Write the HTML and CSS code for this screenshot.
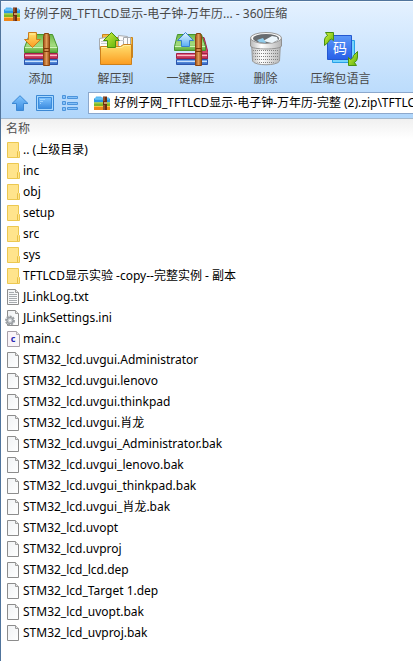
FILE: index.html
```html
<!DOCTYPE html>
<html lang="zh-CN">
<head>
    <meta charset="UTF-8">
    <meta name="viewport" content="width=device-width, initial-scale=1.0">
    <title>好例子网_TFTLCD显示-电子钟-万年历... - 360压缩</title>
    <link rel="stylesheet" href="styles.css">
</head>
<body>

    <svg class="sprite" aria-hidden="true">
        <defs>
            <linearGradient id="gGreen" x1="0" y1="0" x2="0" y2="1">
                <stop offset="0" stop-color="#6cb848"/><stop offset=".6" stop-color="#a4dc80"/><stop offset="1" stop-color="#58a838"/>
            </linearGradient>
            <linearGradient id="gRed" x1="0" y1="0" x2="0" y2="1">
                <stop offset="0" stop-color="#e8708c"/><stop offset="1" stop-color="#b82850"/>
            </linearGradient>
            <linearGradient id="gBlue" x1="0" y1="0" x2="0" y2="1">
                <stop offset="0" stop-color="#80b4f4"/><stop offset="1" stop-color="#3064c0"/>
            </linearGradient>
            <linearGradient id="gBelt" x1="0" y1="0" x2="1" y2="0">
                <stop offset="0" stop-color="#a05018"/><stop offset=".5" stop-color="#e09c58"/><stop offset="1" stop-color="#984810"/>
            </linearGradient>
            <linearGradient id="gOrange" x1="0" y1="0" x2="0" y2="1">
                <stop offset="0" stop-color="#ffe070"/><stop offset="1" stop-color="#fb9c20"/>
            </linearGradient>
            <linearGradient id="gLime" x1="0" y1="0" x2="1" y2="1">
                <stop offset="0" stop-color="#d4f040"/><stop offset="1" stop-color="#58b008"/>
            </linearGradient>
            <linearGradient id="gSky" x1="0" y1="0" x2="0" y2="1">
                <stop offset="0" stop-color="#e4f6ff"/><stop offset="1" stop-color="#58acf4"/>
            </linearGradient>
            <linearGradient id="gNav" x1="0" y1="0" x2="0" y2="1">
                <stop offset="0" stop-color="#80c4ff"/><stop offset="1" stop-color="#3c8ce0"/>
            </linearGradient>
            <linearGradient id="gBin" x1="0" y1="0" x2="1" y2="0">
                <stop offset="0" stop-color="#b8b8b8"/><stop offset=".35" stop-color="#ffffff"/><stop offset="1" stop-color="#b4b4b4"/>
            </linearGradient>
            <linearGradient id="gTile" x1="0" y1="0" x2="0" y2="1">
                <stop offset="0" stop-color="#5c98f8"/><stop offset="1" stop-color="#2860e8"/>
            </linearGradient>
            <linearGradient id="gPage" x1="0" y1="0" x2="1" y2="1">
                <stop offset="0" stop-color="#f0f2f4"/><stop offset="1" stop-color="#ffffff"/>
            </linearGradient>
            <pattern id="holes" width="2" height="3" patternUnits="userSpaceOnUse">
                <rect width="1" height="1" fill="#808080"/>
            </pattern>
        </defs>

        <symbol id="archive" viewBox="0 0 16 14">
            <path d="M1 2.500L2 .5h5l1 1h7v5H0V3z" fill="#58b8f4"/>
            <path d="M0 2.500h16v4H0z" fill="#2c98e4"/>
            <path d="M1 3h14" stroke="#8cdcfc"/>
            <path d="M0 6.500h16V10H0z" fill="#7cb828"/>
            <path d="M0 7h16" stroke="#b8dc4c"/>
            <path d="M0 10h16v4H0z" fill="#f08818"/>
            <path d="M0 10.500h16" stroke="#fcc444"/>
            <path d="M9 .5h4V14H9z" fill="#6c2c10"/>
            <path d="M10 1v4M10 9v5" stroke="#b87848"/>
            <path d="M10 6h3v2h-3z" fill="#c89868"/>
        </symbol>

        <symbol id="belt" viewBox="0 0 34 34">
            <path d="M19.500 4.500l1-3h4l1 3v29h-6z" fill="url(#gBelt)" stroke="#8c4410"/>
            <path d="M20 16.500h5v3h-5z" fill="#d48c50" stroke="#7c3808"/>
        </symbol>
        <symbol id="add" viewBox="0 0 34 34">
            <path d="M.5 27.500h33v5H.5z" fill="url(#gBlue)" stroke="#2c54ac"/>
            <path d="M1 29.500h32" stroke="#c8e0fc"/>
            <path d="M.5 21.500h33v5H.5z" fill="url(#gRed)" stroke="#a02048"/>
            <path d="M1 23.500h32" stroke="#fcbcc8"/>
            <path d="M5.500 2.500h23l5 13v5H.5v-5z" fill="url(#gGreen)" stroke="#48942c"/>
            <path d="M1 15.500h32" stroke="#d0f4b8"/>
            <use href="#belt"/>
            <path d="M4.500.5h8v7h4L8.500 15.500.5 7.500h4z" fill="url(#gOrange)" stroke="#cc7c1c"/>
            <path d="M6 2h5" stroke="#fff0a0"/>
        </symbol>
        <symbol id="extract" viewBox="0 0 34 34">
            <path d="M3.500 2.500h8l2 3h20v20h-30z" fill="#f4b840" stroke="#c8841c"/>
            <path d="M.5 6.500l13-2v13H.5zM19.500 3.500l9 1v13h-9zM24.500 5.500h7v12h-7z" fill="#fcfcfc" stroke="#a8acb0"/>
            <path d="M2 9.500h7M2 11.500h7M21 8.500h4" stroke="#c8ccd0"/>
            <path d="M1.500 14.500h20l3-2h8v20h-31z" fill="url(#gOrange)" stroke="#cc801c"/>
            <path d="M2.500 15.500h20l3-2h6" fill="none" stroke="#fff0a0"/>
            <path d="M12.500.5l8 8h-4v7h-8v-7h-4z" fill="url(#gLime)" stroke="#489010"/>
        </symbol>
        <symbol id="quick" viewBox="0 0 34 34">
            <path d="M28 5.500h2l4 15v6h-6z" fill="#d84468" stroke="#a02048"/>
            <path d="M2.500 27.500h31v5h-31z" fill="url(#gBlue)" stroke="#2c54ac"/>
            <path d="M3 29.500h30" stroke="#c8e0fc"/>
            <path d="M2.500 21.500h31v5h-31z" fill="url(#gRed)" stroke="#a02048"/>
            <path d="M3 23.500h30" stroke="#fcbcc8"/>
            <path d="M3.500 2.500h24l4 12v4H.5v-4z" fill="url(#gGreen)" stroke="#48942c"/>
            <path d="M1 14.500h30" stroke="#d0f4b8"/>
            <use href="#belt" x="2"/>
            <path d="M11.500.5l8 8h-4v6h-8v-6h-4z" fill="url(#gSky)" stroke="#3880d0"/>
        </symbol>
        <symbol id="delete" viewBox="0 0 34 34">
            <path d="M2.500 10h29l-1 19c-2 5-25 5-27 0z" fill="url(#gBin)" stroke="#989898"/>
            <path d="M4 17h26l-1 12c-2 3-22 3-24 0z" fill="url(#holes)"/>
            <path d="M1.500 6v8c1 4 30 4 31 0V6z" fill="url(#gBin)" stroke="#909090"/>
            <ellipse cx="17" cy="6" rx="15.500" ry="5.500" fill="#f8f8f8" stroke="#989898"/>
            <ellipse cx="17" cy="6.500" rx="13" ry="4.500" fill="#686c70"/>
            <path d="M14 9l9-5 5 1 1 3-6 3z" fill="#ecf6fc"/>
            <path d="M8 8l6-2 3 5-7-1z" fill="#90ccec"/>
        </symbol>

        <symbol id="up" viewBox="0 0 18 16">
            <path d="M9 .7L17 8.500h-4.500v7h-7v-7H1z" fill="url(#gNav)" stroke="#3c88d4"/>
        </symbol>
        <symbol id="view" viewBox="0 0 18 16">
            <path d="M.5.5h17v15H.5z" fill="#a8d8ff" stroke="#3c88d4"/>
            <path d="M2.500 2.500h13v11h-13z" fill="url(#gNav)" stroke="#3c8cdc"/>
            <path d="M4 4.500h5M4 6.500h3M4 8.500h1" stroke="#a0d4ff"/>
        </symbol>
        <symbol id="list" viewBox="0 0 16 16">
            <path d="M.5.5h3v3h-3zM.5 6.500h3v3h-3zM.5 12.500h3v3h-3zM5.500 1.500h10v2h-10zM5.500 7.500h10v2h-10zM5.500 12.500h10v2h-10z" fill="#84c0f8" stroke="#4c94dc"/>
        </symbol>

        <symbol id="folder" viewBox="0 0 14 16">
            <path d="M.5.5h11v8l1 1v6H.5z" fill="#ffe48c" stroke="#ecc850"/>
            <path d="M10.500 15V9.500l1-1" fill="none" stroke="#e8c044"/>
        </symbol>
        <symbol id="file" viewBox="0 0 14 16">
            <path d="M.5.5h8l3 3v12H.5z" fill="url(#gPage)" stroke="#8c8c8c"/>
            <path d="M8.500.5v3h3" fill="#e4e4e4" stroke="#9c9c9c"/>
        </symbol>
        <symbol id="text" viewBox="0 0 14 16">
            <use href="#file"/>
            <path d="M2 3.500h5M2 5.500h8M2 7.500h8M2 9.500h8M2 11.500h8M2 13.500h8" stroke="#a8acb0"/>
        </symbol>
    </svg>

    <div class="window">
        <header class="top">
            <div class="title-bar">
                <svg class="archive-icon"><use href="#archive"/></svg>
                <h1 class="title">好例子网_TFTLCD显示-电子钟-万年历... - 360压缩</h1>
            </div>

            <div class="toolbar">
                <button class="tool"><svg class="tool-icon"><use href="#add"/></svg>添加</button>
                <button class="tool"><svg class="tool-icon"><use href="#extract"/></svg>解压到</button>
                <button class="tool"><svg class="tool-icon"><use href="#quick"/></svg>一键解压</button>
                <button class="tool"><svg class="tool-icon"><use href="#delete"/></svg>删除</button>
                <button class="tool">
                    <svg class="tool-icon" viewBox="0 0 34 34">
                        <path d="M8.500 8.500h22v22h-22z" fill="#74d4fc" stroke="#28a0e8"/>
                        <path d="M3.500 3.500h24v24h-24z" fill="url(#gTile)" stroke="#2458d0"/>
                        <text x="16" y="21" text-anchor="middle" class="tile-text">码</text>
                        <path d="M.5 13.500V8q0-3 3-4.500L1.500.5h8v8L7.500 7q-3 1-3 3z" fill="url(#gLime)" stroke="#489010"/>
                        <path d="M33.500 19.500V25q0 4-3 5.500l2 3h-8v-8l2 2q3-1 3-4z" fill="url(#gLime)" stroke="#489010"/>
                    </svg>
                    压缩包语言
                </button>
            </div>

            <div class="address-bar">
                <button class="nav" aria-label="向上"><svg class="nav-icon"><use href="#up"/></svg></button>
                <button class="nav" aria-label="预览"><svg class="nav-icon"><use href="#view"/></svg></button>
                <button class="nav" aria-label="列表"><svg class="nav-icon"><use href="#list"/></svg></button>
                <label class="address">
                    <svg class="archive-icon"><use href="#archive"/></svg>
                    <input type="text" class="address-input" aria-label="路径" value="好例子网_TFTLCD显示-电子钟-万年历-完整 (2).zip\TFTLCD显示实验">
                </label>
            </div>
        </header>

        <table class="files">
            <thead>
                <tr><th>名称</th></tr>
            </thead>
            <tbody>
                <tr><td><svg class="file-icon"><use href="#folder"/></svg>.. (上级目录)</td></tr>
                <tr><td><svg class="file-icon"><use href="#folder"/></svg>inc</td></tr>
                <tr><td><svg class="file-icon"><use href="#folder"/></svg>obj</td></tr>
                <tr><td><svg class="file-icon"><use href="#folder"/></svg>setup</td></tr>
                <tr><td><svg class="file-icon"><use href="#folder"/></svg>src</td></tr>
                <tr><td><svg class="file-icon"><use href="#folder"/></svg>sys</td></tr>
                <tr><td><svg class="file-icon"><use href="#folder"/></svg>TFTLCD显示实验 -copy--完整实例 - 副本</td></tr>
                <tr><td><svg class="file-icon"><use href="#text"/></svg>JLinkLog.txt</td></tr>
                <tr>
                    <td>
                        <svg class="file-icon">
                            <use href="#file"/>
                            <circle cx="3" cy="10.500" r="4" fill="#d0d4d8" stroke="#9ca0a4" stroke-width="2" stroke-dasharray="2 1"/>
                            <circle cx="3" cy="10.500" r="3" fill="#c8ccd0" stroke="#909498"/>
                            <circle cx="3" cy="10.500" r="1" fill="#ffffff"/>
                        </svg>JLinkSettings.ini
                    </td>
                </tr>
                <tr>
                    <td>
                        <svg class="file-icon">
                            <path d="M.5.5h9l3 3v12H.5z" fill="#faf4f8" stroke="#a8a0a8"/>
                            <path d="M9.500.5v3h3" fill="#e4e4e4" stroke="#b4acb4"/>
                            <text x="6" y="11" text-anchor="middle" class="c-text">c</text>
                        </svg>main.c
                    </td>
                </tr>
                <tr><td><svg class="file-icon"><use href="#file"/></svg>STM32_lcd.uvgui.Administrator</td></tr>
                <tr><td><svg class="file-icon"><use href="#file"/></svg>STM32_lcd.uvgui.lenovo</td></tr>
                <tr><td><svg class="file-icon"><use href="#file"/></svg>STM32_lcd.uvgui.thinkpad</td></tr>
                <tr><td><svg class="file-icon"><use href="#file"/></svg>STM32_lcd.uvgui.肖龙</td></tr>
                <tr><td><svg class="file-icon"><use href="#file"/></svg>STM32_lcd.uvgui_Administrator.bak</td></tr>
                <tr><td><svg class="file-icon"><use href="#file"/></svg>STM32_lcd.uvgui_lenovo.bak</td></tr>
                <tr><td><svg class="file-icon"><use href="#file"/></svg>STM32_lcd.uvgui_thinkpad.bak</td></tr>
                <tr><td><svg class="file-icon"><use href="#file"/></svg>STM32_lcd.uvgui_肖龙.bak</td></tr>
                <tr><td><svg class="file-icon"><use href="#file"/></svg>STM32_lcd.uvopt</td></tr>
                <tr><td><svg class="file-icon"><use href="#file"/></svg>STM32_lcd.uvproj</td></tr>
                <tr><td><svg class="file-icon"><use href="#file"/></svg>STM32_lcd_lcd.dep</td></tr>
                <tr><td><svg class="file-icon"><use href="#file"/></svg>STM32_lcd_Target 1.dep</td></tr>
                <tr><td><svg class="file-icon"><use href="#file"/></svg>STM32_lcd_uvopt.bak</td></tr>
                <tr><td><svg class="file-icon"><use href="#file"/></svg>STM32_lcd_uvproj.bak</td></tr>
            </tbody>
        </table>
    </div>

</body>
</html>
```
FILE: styles.css
```css
* {
    box-sizing: border-box;
}

body {
    margin: 0;
    font-family: "Noto Sans", "Noto Sans CJK SC", sans-serif;
    font-size: 12px;
    line-height: 20px;
    color: #000;
    background-color: #fff;
}

button,
input {
    font: inherit;
    border: none;
    background: none;
    padding: 0;
}

.sprite {
    position: absolute;
    width: 0;
    height: 0;
}

.window {
    min-height: 100vh;
    border-left: 1px solid #50749c;
    border-top: 1px solid #50749c;
    overflow: hidden;
}

.top {
    background: linear-gradient(#e4f1ff, #b0d6fb);
    border-top: 1px solid #f4faff;
    border-bottom: 1px solid #a4b8cc;
}

.title-bar {
    display: flex;
    align-items: center;
    gap: 4px;
    padding: 2px 3px;
}

.title {
    margin: 0;
    font-size: 12px;
    font-weight: normal;
    color: #484848;
    white-space: nowrap;
}

.archive-icon {
    width: 16px;
    height: 14px;
    flex-shrink: 0;
}

.toolbar {
    display: flex;
    padding: 6px 2px 0;
}

.tool {
    display: flex;
    flex-direction: column;
    align-items: center;
    width: 75px;
    color: #484848;
    white-space: nowrap;
}

.tool-icon {
    width: 34px;
    height: 34px;
    margin-bottom: 3px;
}

.tile-text {
    font-size: 14px;
    fill: #fff;
}

.address-bar {
    display: flex;
    align-items: center;
    gap: 7px;
    padding: 3px 0 4px 10px;
}

.nav {
    display: flex;
}

.nav-icon {
    width: 18px;
    height: 16px;
}

.address {
    display: flex;
    align-items: center;
    flex-grow: 1;
    gap: 4px;
    height: 22px;
    margin-left: 2px;
    padding-left: 5px;
    border: 1px solid #8ca8cc;
    border-right: none;
    background-color: #fff;
}

.address-input {
    flex: 1;
    min-width: 0;
    height: 20px;
    outline: none;
}

.files {
    width: 100%;
    border-collapse: collapse;
}

.files th {
    height: 20px;
    padding: 0 5px;
    font-weight: normal;
    text-align: left;
    color: #505050;
    background: linear-gradient(#f0f0f0, #fff);
}

.files td {
    display: flex;
    align-items: center;
    gap: 2px;
    height: 21px;
    padding: 0 6px;
    white-space: nowrap;
}

.file-icon {
    width: 14px;
    height: 16px;
    flex-shrink: 0;
    overflow: visible;
}

.c-text {
    font-size: 9px;
    font-weight: bold;
    fill: #2828b4;
}
```
